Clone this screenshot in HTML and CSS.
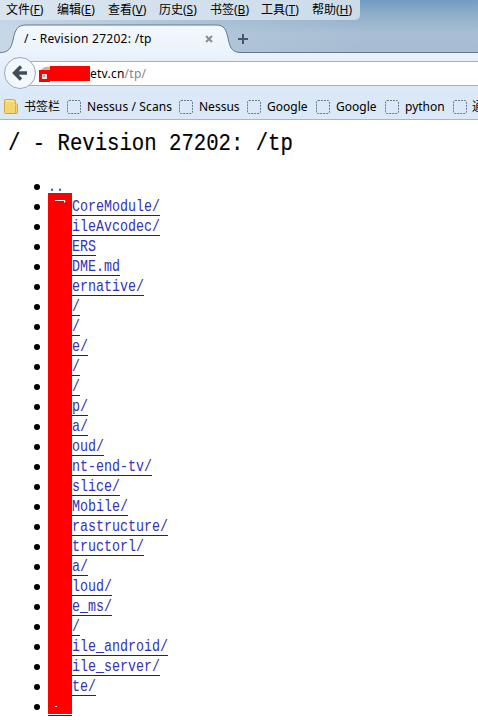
FILE: index.html
```html
<!DOCTYPE html>
<html lang="zh-CN">
<head>
<meta charset="utf-8">
<title>/ - Revision 27202: /tp</title>
<link rel="stylesheet" href="styles.css">
</head>
<body>
<header class="chrome">
  <div class="top">
    <nav class="menu">
      <span>文件(<u>F</u>)</span><span>编辑(<u>E</u>)</span><span>查看(<u>V</u>)</span><span>历史(<u>S</u>)</span><span>书签(<u>B</u>)</span><span>工具(<u>T</u>)</span><span>帮助(<u>H</u>)</span>
    </nav>
    <div class="tabs">
      <svg class="tab-shape" width="478" height="34" viewBox="0 0 478 34">
        <defs><linearGradient id="tab" x1="0" y1="0" x2="0" y2="1"><stop offset="0" stop-color="#f3f8fd"/><stop offset="1" stop-color="#e9f2fc"/></linearGradient></defs>
        <path d="M0 33V28.500C8 28.500 11 25 13 16C15 5 18 1 26 1H216C224 1 226 5 228 14C230 24 232 28.500 241 28.500H478V33Z" fill="url(#tab)"/>
        <path d="M0 28.500C8 28.500 11 25 13 16C15 5 18 1 26 1H216C224 1 226 5 228 14C230 24 232 28.500 241 28.500H478" fill="none" stroke="#66788f"/>
      </svg>
      <span class="tab-title">/ - Revision 27202: /tp</span>
      <svg class="close" width="8" height="8" viewBox="0 0 8 8"><path d="M1 1L7 7M7 1L1 7" stroke="#858d98" stroke-width="2"/></svg>
      <svg class="plus" width="12" height="12" viewBox="0 0 12 12"><path d="M6 1V11M1 6H11" stroke="#46566b" stroke-width="2"/></svg>
    </div>
  </div>
  <div class="address">
    <div class="field"><span class="url">etv.cn<i>/tp/</i></span></div>
    <svg class="back" width="34" height="34" viewBox="0 0 34 34">
      <circle cx="17" cy="17" r="15.500" fill="#f3f8fd" stroke="#99a9bc"/>
      <path d="M11.500 17H24M18 10.500L11.500 17L18 23.500" fill="none" stroke="#414c59" stroke-width="3.400"/>
    </svg>
    <svg class="mask" width="52" height="18" viewBox="0 0 52 18">
      <path d="M0 5H2C4 2 7 1 11 2V5Z" fill="#d9a9a5"/>
      <path d="M0 5H11V1H51V16H11V17H0Z" fill="#f00"/>
      <path d="M3 9H8V14H3Z" fill="#f3dada"/><path d="M4 10H6V12H4Z" fill="#aaa"/>
    </svg>
  </div>
  <nav class="bookmarks">
    <span class="folder"><svg width="15" height="16" viewBox="0 0 15 16"><path d="M.5 1.500Q.5.500 1.500.500H9.500Q11.500.500 11.500 2.500V5H12.500Q13.500 5 13.500 6V13Q13.500 14.500 12 14.500H1.500Q.5 14.500.5 13.500Z" fill="#f3d66e" stroke="#d0aa3d"/><path d="M2 2H9.500" stroke="#fff0ac"/><path d="M11.500 6V14" stroke="#d6b348"/></svg>书签栏</span>
    <span class="b1"><svg class="blank"><rect x=".5" y=".5" width="13" height="13" rx="1.500"/></svg>Nessus / Scans</span>
    <span class="b2"><svg class="blank"><rect x=".5" y=".5" width="13" height="13" rx="1.500"/></svg>Nessus</span>
    <span class="b3"><svg class="blank"><rect x=".5" y=".5" width="13" height="13" rx="1.500"/></svg>Google</span>
    <span class="b3"><svg class="blank"><rect x=".5" y=".5" width="13" height="13" rx="1.500"/></svg>Google</span>
    <span class="b4"><svg class="blank"><rect x=".5" y=".5" width="13" height="13" rx="1.500"/></svg>python</span>
    <span class="b5"><svg class="blank"><rect x=".5" y=".5" width="13" height="13" rx="1.500"/></svg>通</span>
  </nav>
</header>
<main>
  <h1><span>/ - Revision 27202: /tp</span></h1>
  <div class="listing">
    <ul>
      <li class="parent"><a><span>..</span></a></li>
      <li><a><span>CoreModule/</span></a></li>
      <li><a><span>ileAvcodec/</span></a></li>
      <li><a><span>ERS</span></a></li>
      <li><a><span>DME.md</span></a></li>
      <li><a><span>ernative/</span></a></li>
      <li><a><span>/</span></a></li>
      <li><a><span>/</span></a></li>
      <li><a><span>e/</span></a></li>
      <li><a><span>/</span></a></li>
      <li><a><span>/</span></a></li>
      <li><a><span>p/</span></a></li>
      <li><a><span>a/</span></a></li>
      <li><a><span>oud/</span></a></li>
      <li><a><span>nt-end-tv/</span></a></li>
      <li><a><span>slice/</span></a></li>
      <li><a><span>Mobile/</span></a></li>
      <li><a><span>rastructure/</span></a></li>
      <li><a><span>tructorl/</span></a></li>
      <li><a><span>a/</span></a></li>
      <li><a><span>loud/</span></a></li>
      <li><a><span>e_ms/</span></a></li>
      <li><a><span>/</span></a></li>
      <li><a><span>ile_android/</span></a></li>
      <li><a><span>ile_server/</span></a></li>
      <li><a><span>te/</span></a></li>
      <li class="last"><a></a></li>
    </ul>
    <svg class="redaction" width="24" height="521" viewBox="0 0 24 521"><path d="M0 0H24V521H0Z" fill="#f00"/><path d="M7 7.500H17M16 8H17V9H16" fill="none" stroke="#fff"/><path d="M7 513.500H9" stroke="#fff"/></svg>
  </div>
</main>
</body>
</html>
```
FILE: styles.css
```css
* { box-sizing: border-box; }
body {
  margin: 0;
  height: 720px;
  overflow: hidden;
  background: #fff;
  color: #000;
  font: 12px/18px "Noto Sans", "Noto Sans CJK SC", sans-serif;
}
.chrome { height: 120px; background: #dae8f7; border-bottom: 1px solid #a3b6ce; }
.top {
  height: 57px;
  background: linear-gradient(90deg, rgba(205, 220, 234, .85), rgba(190, 209, 227, .4) 45%, transparent 75%),
    linear-gradient(#709dc2, #94b2cc 30%, #a9bfd4 60%, #a7bbd0);
}
.menu {
  display: flex;
  width: 360px;
  height: 20px;
  padding-left: 6px;
  background: linear-gradient(90deg, #d9e4ef, #d2e0ec 60%, #cbdbe8);
  border-radius: 0 0 5px 0;
  line-height: 20px;
}
.menu span { flex: none; width: 51px; white-space: nowrap; }
.menu u { text-underline-offset: 1px; }
.tabs { position: relative; display: flex; height: 37px; padding: 5px 0 0 24px; }
.tab-shape { position: absolute; left: 0; top: 4px; }
.tab-title { position: relative; width: 181px; line-height: 27px; white-space: nowrap; letter-spacing: .28px; }
.close { position: relative; margin-top: 10px; }
.plus { position: relative; margin: 8px 0 0 24px; }
.address { position: relative; height: 36px; background: linear-gradient(#e8f1fb, #dbe8f7); padding-top: 4px; }
.field { height: 25px; margin-left: 20px; padding-left: 70px; background: #fff; border: solid #a0b2c8; border-width: 1px 0; line-height: 24px; }
.url { letter-spacing: .25px; }
.url i { color: #858585; font-style: normal; }
.back { position: absolute; left: 3px; top: -1px; }
.mask { position: absolute; left: 39px; top: 8px; }
.bookmarks { display: flex; height: 26px; padding-left: 4px; overflow: hidden; }
.bookmarks span { display: flex; flex: none; align-items: center; white-space: nowrap; line-height: 26px; padding-top: 1px; }
.bookmarks .folder { width: 63px; gap: 5px; }
.blank { width: 14px; height: 14px; margin-right: 6px; fill: none; stroke: #69798b; stroke-dasharray: 2 1; }
.bookmarks .b1 { width: 112px; letter-spacing: .12px; }
.b2 { width: 68px; }
.b3 { width: 69px; }
.b4 { width: 68px; }
.b5 { width: 40px; }
.b5 .blank { margin-right: 5px; }
main { font-family: "Liberation Mono", monospace; }
h1 { height: 48px; margin: 0; padding: 8px 0 0 8px; font-size: 20.65px; line-height: 32px; font-weight: 400; -webkit-text-stroke: .15px #000; }
h1 span { display: inline-block; transform: scaleY(1.16); white-space: pre; }
.listing { position: relative; padding-top: 9px; }
ul { margin: 0; padding: 0; list-style: none; }
li { display: flex; align-items: center; height: 20px; padding-left: 34px; }
li::before { content: ""; width: 6px; height: 6px; margin-right: 32px; border-radius: 50%; background: #000; }
a { height: 18px; color: #3232b8; border-bottom: 1px solid #1a1a9c; font-size: 13.33px; line-height: 18px; }
a span { display: inline-block; transform: scaleY(1.2); }
.parent::before, .last::before { margin-right: 8px; }
.parent a { border-color: transparent; color: #444; }
.last a { width: 24px; }
.redaction { position: absolute; left: 48px; top: 25px; }
```
